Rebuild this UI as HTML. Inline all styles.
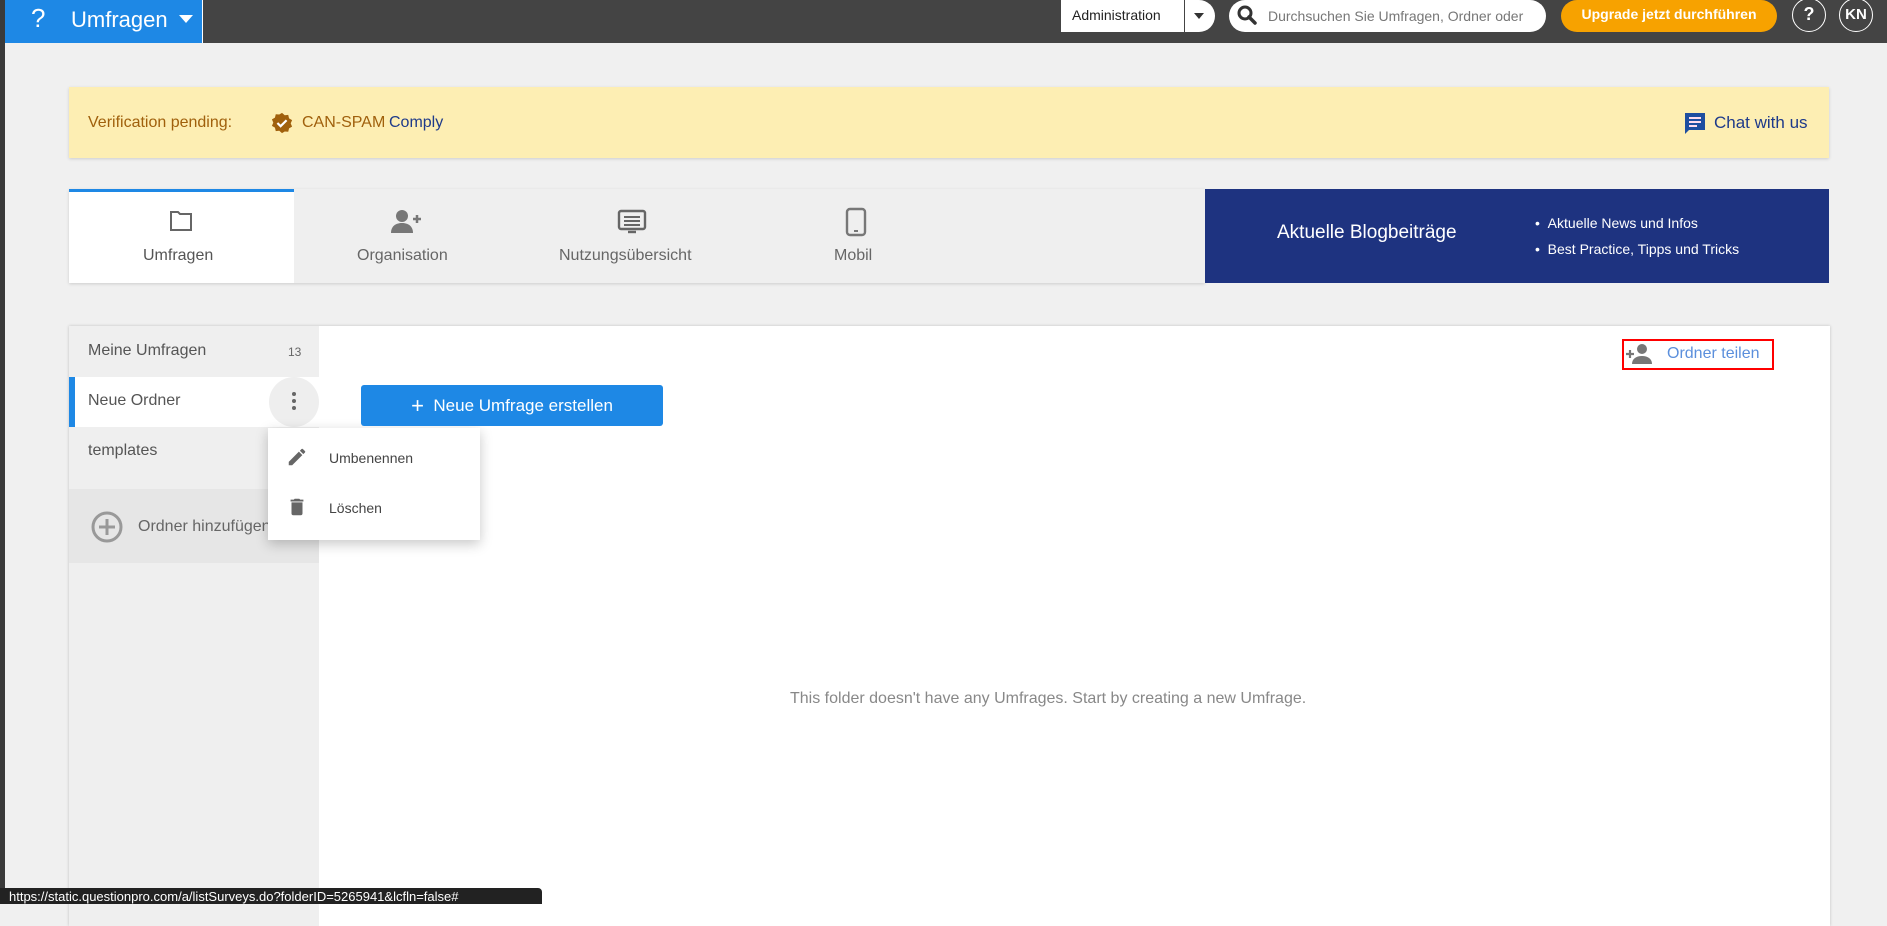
<!DOCTYPE html>
<html><head><meta charset="utf-8"><style>
*{box-sizing:border-box;margin:0;padding:0}
body{width:1887px;height:904px;overflow:hidden;background:#f0f0f0;font-family:"Liberation Sans",sans-serif;position:relative}
.abs{position:absolute}
#top{left:0;top:0;width:1887px;height:43px;background:#444}
#lstrip{left:0;top:0;width:5px;height:904px;background:#3a3a3a}
#logo{left:5px;top:0;width:198px;height:43px;background:#1e88e5;border-right:1px solid #fff;color:#fff}
.t{white-space:nowrap}
</style></head><body>
<div class="abs" id="top"></div>
<div class="abs" id="lstrip"></div>
<div class="abs" id="logo">
 <div class="abs t" style="left:26px;top:3px;font-size:26px">?</div>
 <div class="abs t" style="left:66px;top:7px;font-size:22px">Umfragen</div>
 <div class="abs" style="left:174px;top:15px;width:0;height:0;border-left:7px solid transparent;border-right:7px solid transparent;border-top:8px solid #fff"></div>
</div>
<div class="abs" style="left:1061px;top:0;width:154px;height:32px;background:#fff;border-radius:0 16px 16px 0"></div>
<div class="abs t" style="left:1072px;top:7px;font-size:14px;color:#222">Administration</div>
<div class="abs" style="left:1184px;top:0;width:1px;height:32px;background:#444"></div>
<div class="abs" style="left:1194px;top:13px;border-left:5px solid transparent;border-right:5px solid transparent;border-top:6px solid #333"></div>
<div class="abs" style="left:1229px;top:0;width:317px;height:32px;background:#fff;border-radius:16px"></div>
<svg class="abs" style="left:1236px;top:4px" width="22" height="22" viewBox="0 0 22 22"><circle cx="9" cy="9" r="6" fill="none" stroke="#333" stroke-width="3"/><path d="M13 13l6 6" stroke="#333" stroke-width="3.5" stroke-linecap="round"/></svg>
<div class="abs t" style="left:1268px;top:8px;font-size:14px;color:#777;width:268px;overflow:hidden">Durchsuchen Sie Umfragen, Ordner oder</div>
<div class="abs t" style="left:1561px;top:0;width:216px;height:32px;background:#f7a200;border-radius:16px;color:#fff;font-size:14px;font-weight:bold;text-align:center;line-height:28px">Upgrade jetzt durchführen</div>
<div class="abs t" style="left:1792px;top:-2px;width:34px;height:34px;border:1.5px solid #fff;border-radius:50%;color:#fff;font-weight:bold;font-size:18px;text-align:center;line-height:31px">?</div>
<div class="abs t" style="left:1839px;top:-2px;width:34px;height:34px;border:1.5px solid #fff;border-radius:50%;color:#fff;font-weight:bold;font-size:15px;text-align:center;line-height:31px">KN</div>

<div class="abs" style="left:69px;top:87px;width:1760px;height:71px;background:#fdeeb3;box-shadow:0 1px 3px rgba(0,0,0,.15)"></div>
<div class="abs t" style="left:88px;top:114px;font-size:16px;color:#a0600c">Verification pending:</div>
<svg class="abs" style="left:271px;top:112px" width="22" height="22" viewBox="0 0 24 24"><path d="M12 1l3 2.5 3.8-.3.9 3.7 3.3 2-1.5 3.5 1.5 3.5-3.3 2-.9 3.7-3.8-.3L12 23l-3-2.5-3.8.3-.9-3.7L1 15.1l1.5-3.5L1 8.1l3.3-2 .9-3.7 3.8.3z" fill="#a0600c"/><path d="M7 12l3.5 3.5L17 9" stroke="#fff" stroke-width="2.4" fill="none"/></svg>
<div class="abs t" style="left:302px;top:114px;font-size:16px;color:#a0600c">CAN-SPAM</div>
<div class="abs t" style="left:389px;top:114px;font-size:16px;color:#1e3a8a">Comply</div>
<svg class="abs" style="left:1684px;top:112px" width="22" height="24" viewBox="0 0 22 24"><path d="M1 1h20v17H5l-4 4z" fill="#1e4ea0"/><path d="M5 6h12M5 10h12M5 14h8" stroke="#fde" stroke-width="2"/></svg>
<div class="abs t" style="left:1714px;top:113px;font-size:17px;color:#1e3a8a">Chat with us</div>

<div class="abs" style="left:69px;top:189px;width:1136px;height:94px;background:#efefef;box-shadow:0 1px 3px rgba(0,0,0,.15)"></div>
<div class="abs" style="left:69px;top:189px;width:225px;height:94px;background:#fff;border-top:3px solid #1e88e5"></div>
<svg class="abs" style="left:169px;top:210px" width="24" height="22" viewBox="0 0 24 22"><path d="M2 2h7l2 2h11v16H2z" fill="none" stroke="#666" stroke-width="2"/></svg>
<div class="abs t" style="left:143px;top:247px;font-size:16px;color:#555">Umfragen</div>
<svg class="abs" style="left:391px;top:209px" width="32" height="26" viewBox="0 0 32 26"><circle cx="11" cy="7" r="6" fill="#777"/><path d="M0 24c0-7 5-10 11-10s11 3 11 10z" fill="#777"/><path d="M26 6v8M22 10h8" stroke="#777" stroke-width="2.5"/></svg>
<div class="abs t" style="left:357px;top:247px;font-size:16px;color:#666">Organisation</div>
<svg class="abs" style="left:617px;top:209px" width="30" height="26" viewBox="0 0 30 26"><rect x="2" y="2" width="26" height="18" rx="2" fill="none" stroke="#666" stroke-width="2.4"/><path d="M7 8h16M7 12h16M7 16h16" stroke="#666" stroke-width="2"/><path d="M11 23h8" stroke="#666" stroke-width="2.4"/></svg>
<div class="abs t" style="left:559px;top:247px;font-size:16px;color:#666">Nutzungsübersicht</div>
<svg class="abs" style="left:845px;top:207px" width="22" height="30" viewBox="0 0 22 30"><rect x="2" y="2" width="18" height="26" rx="3" fill="none" stroke="#777" stroke-width="2.4"/><path d="M9 24h4" stroke="#777" stroke-width="2"/></svg>
<div class="abs t" style="left:834px;top:247px;font-size:16px;color:#666">Mobil</div>
<div class="abs" style="left:1205px;top:189px;width:624px;height:94px;background:#1e3380"></div>
<div class="abs t" style="left:1277px;top:222px;font-size:19px;color:#fff">Aktuelle Blogbeiträge</div>
<div class="abs t" style="left:1535px;top:210px;font-size:14px;color:#fff;line-height:26px">• &nbsp;Aktuelle News und Infos<br>• &nbsp;Best Practice, Tipps und Tricks</div>

<div class="abs" style="left:69px;top:326px;width:1761px;height:600px;background:#fff;box-shadow:0 0 3px rgba(0,0,0,.2)"></div>
<div class="abs" style="left:69px;top:326px;width:250px;height:600px;background:#efefef"></div>
<div class="abs t" style="left:88px;top:342px;font-size:16px;color:#555">Meine Umfragen</div>
<div class="abs t" style="left:288px;top:345px;font-size:12px;color:#666">13</div>
<div class="abs" style="left:69px;top:377px;width:250px;height:50px;background:#fff;border-left:6px solid #1e88e5"></div>
<div class="abs t" style="left:88px;top:392px;font-size:16px;color:#555">Neue Ordner</div>
<div class="abs" style="left:269px;top:377px;width:50px;height:50px;border-radius:50%;background:#eee"></div>
<div class="abs" style="left:292px;top:392px;width:4px;height:4px;border-radius:2px;background:#666;box-shadow:0 7px 0 #666,0 14px 0 #666"></div>
<div class="abs t" style="left:88px;top:442px;font-size:16px;color:#555">templates</div>
<div class="abs" style="left:69px;top:489px;width:250px;height:74px;background:#e6e6e6"></div>
<svg class="abs" style="left:90px;top:510px" width="34" height="34" viewBox="0 0 34 34"><circle cx="17" cy="17" r="14" fill="none" stroke="#999" stroke-width="3"/><path d="M17 9v16M9 17h16" stroke="#999" stroke-width="3"/></svg>
<div class="abs t" style="left:138px;top:518px;font-size:16px;color:#666;width:130px;overflow:hidden">Ordner hinzufügen</div>

<div class="abs" style="left:268px;top:428px;width:212px;height:112px;background:#fff;box-shadow:0 4px 12px rgba(0,0,0,.22)"></div>
<svg class="abs" style="left:286px;top:446px" width="22" height="22" viewBox="0 0 24 24"><path d="M3 17.25V21h3.75L17.81 9.94l-3.75-3.75zM20.71 7.04a1 1 0 000-1.41l-2.34-2.34a1 1 0 00-1.41 0l-1.83 1.83 3.75 3.75z" fill="#666"/></svg>
<div class="abs t" style="left:329px;top:450px;font-size:14px;color:#444">Umbenennen</div>
<svg class="abs" style="left:286px;top:495px" width="22" height="24" viewBox="0 0 24 24"><path d="M6 19a2 2 0 002 2h8a2 2 0 002-2V7H6zM19 4h-3.5l-1-1h-5l-1 1H5v2h14z" fill="#666"/></svg>
<div class="abs t" style="left:329px;top:500px;font-size:14px;color:#444">Löschen</div>

<div class="abs t" style="left:361px;top:385px;width:302px;height:41px;background:#1e88e5;border-radius:3px;color:#fff;font-size:17px;text-align:center;line-height:41px"><span style="font-size:22px;vertical-align:-2px">+</span>&nbsp; Neue Umfrage erstellen</div>

<div class="abs" style="left:1622px;top:339px;width:152px;height:31px;border:2.5px solid #f00"></div>
<svg class="abs" style="left:1626px;top:343px" width="26" height="22" viewBox="0 0 26 22"><circle cx="16" cy="6" r="5" fill="#777"/><path d="M6 21c0-5 4-8 10-8s10 3 10 8z" fill="#777"/><path d="M4 7v8M0 11h8" stroke="#777" stroke-width="2.2"/></svg>
<div class="abs t" style="left:1667px;top:345px;font-size:16px;color:#5b8fdc">Ordner teilen</div>

<div class="abs t" style="left:790px;top:690px;font-size:16px;color:#888">This folder doesn't have any Umfrages. Start by creating a new Umfrage.</div>

<div class="abs t" style="left:0;top:888px;width:542px;height:16px;background:#222;border-radius:0 4px 0 0;color:#fff;font-size:13px;line-height:17px;padding-left:9px">https://static.questionpro.com/a/listSurveys.do?folderID=5265941&amp;lcfln=false#</div>
</body></html>
